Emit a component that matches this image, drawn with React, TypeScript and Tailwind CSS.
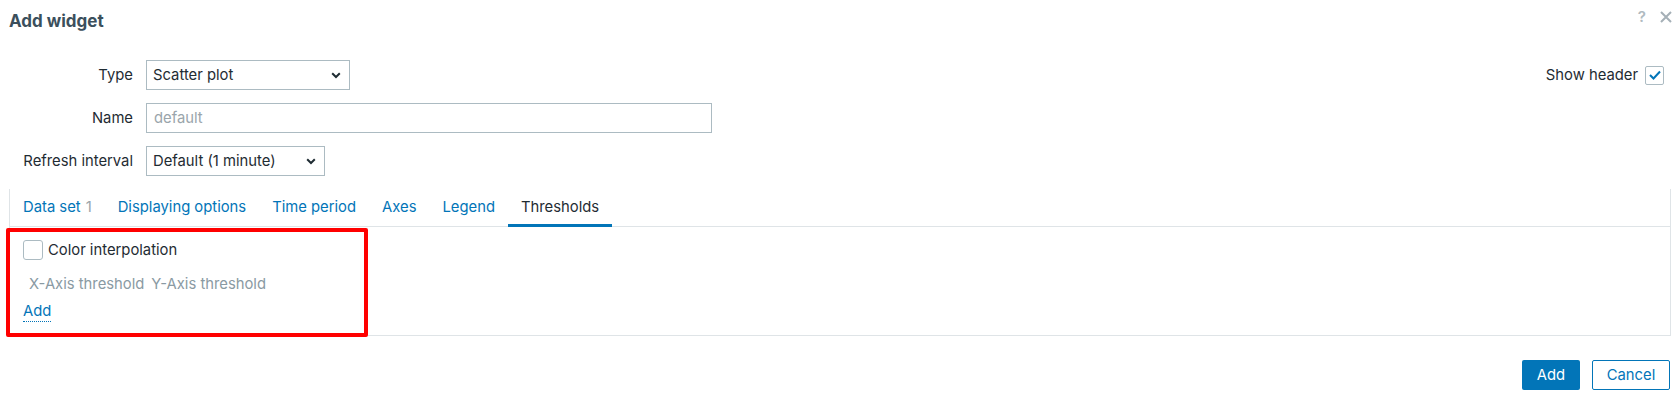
import React from "react";

function Chevron() {
  return (
    <svg width="10" height="7" viewBox="0 0 10 7" fill="none">
      <path d="M1.2 1.3 L5 5 L8.8 1.3" stroke="#1f2c33" strokeWidth="2" />
    </svg>
  );
}

export default function App() {
  const tabs = [
    { label: "Data set", extra: "1" },
    { label: "Displaying options" },
    { label: "Time period" },
    { label: "Axes" },
    { label: "Legend" },
    { label: "Thresholds", active: true },
  ];
  return (
    <div
      className="relative w-[1680px] h-[406px] bg-white text-[14.8px] text-[#1f2c33]"
      style={{ fontFamily: "Inter, 'Noto Sans', sans-serif" }}
    >
      {/* header */}
      <div className="flex items-start justify-between pl-[9px] pr-[8px] pt-[9px] h-[60px]">
        <div className="text-[17px] font-bold text-[#3b4f5c] leading-[24px]">Add widget</div>
        <div className="flex items-center gap-[14px] text-[#b0bac0] leading-none">
          <span className="text-[15px] font-semibold">?</span>
          <svg width="12" height="12" viewBox="0 0 12 12">
            <path d="M1 1 L11 11 M11 1 L1 11" stroke="#a5b0b7" strokeWidth="2" />
          </svg>
        </div>
      </div>

      {/* form */}
      <div className="flex justify-between pr-[16px]">
        <div className="flex flex-col gap-[13px] pl-[9px]">
          <div className="flex items-center gap-[13px]">
            <div className="w-[124px] text-right">Type</div>
            <div className="w-[204px] h-[30px] border border-[#acbbc2] flex items-center justify-between pl-[6px] pr-[8px]">
              <span>Scatter plot</span>
              <Chevron />
            </div>
          </div>
          <div className="flex items-center gap-[13px]">
            <div className="w-[124px] text-right">Name</div>
            <div className="w-[566px] h-[30px] border border-[#acbbc2] flex items-center pl-[7px] text-[#9aa5ab]">
              default
            </div>
          </div>
          <div className="flex items-center gap-[13px]">
            <div className="w-[124px] text-right">Refresh interval</div>
            <div className="w-[179px] h-[30px] border border-[#acbbc2] flex items-center justify-between pl-[6px] pr-[8px]">
              <span>Default (1 minute)</span>
              <Chevron />
            </div>
          </div>
        </div>
        <div className="flex items-center gap-[7px] h-[30px]">
          <span>Show header</span>
          <div className="w-[19px] h-[19px] border border-[#acbbc2] rounded-[2px] flex items-center justify-center">
            <svg width="12" height="10" viewBox="0 0 12 10" fill="none">
              <path d="M1 5 L4.5 8.5 L11 1.5" stroke="#0275b8" strokeWidth="2" />
            </svg>
          </div>
        </div>
      </div>

      {/* tabs container */}
      <div className="relative mt-[13px] mx-[9px] w-[1662px] h-[147px] border-l border-r border-b border-[#dfe4e7]">
        <div className="flex h-[38px] border-b border-[#dfe4e7]">
          {tabs.map((t) => (
            <div
              key={t.label}
              className={
                "relative flex items-center px-[13px] " +
                (t.active ? "text-[#1f2c33]" : "text-[#0275b8]")
              }
            >
              <span>{t.label}</span>
              {t.extra && <span className="ml-[5px] text-[#9aa5ab]">{t.extra}</span>}
              {t.active && (
                <div className="absolute left-0 right-0 bottom-[-1px] h-[3px] bg-[#0275b8]" />
              )}
            </div>
          ))}
        </div>
        <div className="px-[13px] pt-[13px]">
          <div className="flex items-center gap-[5px] h-[20px]">
            <div className="w-[20px] h-[20px] border border-[#acbbc2] rounded-[3px]" />
            <span>Color interpolation</span>
          </div>
          <div className="flex gap-[7px] pl-[6px] mt-[13px] text-[#8a9aa3]">
            <span>X-Axis threshold</span>
            <span>Y-Axis threshold</span>
          </div>
          <div className="mt-[5px]">
            <span className="text-[#0275b8] border-b border-dotted border-[#0275b8] leading-[19px] inline-block">
              Add
            </span>
          </div>
        </div>
      </div>

      {/* red annotation box */}
      <div className="absolute left-[6px] top-[228px] w-[362px] h-[109px] border-[4px] border-[#ff0000] rounded-[2px] pointer-events-none" />

      {/* footer */}
      <div className="flex justify-end gap-[12px] pr-[10px] mt-[24px]">
        <button className="w-[58px] h-[30px] bg-[#0275b8] text-white rounded-[2px]">Add</button>
        <button className="w-[78px] h-[30px] border border-[#0275b8] text-[#0275b8] rounded-[2px] bg-white">
          Cancel
        </button>
      </div>
    </div>
  );
}
